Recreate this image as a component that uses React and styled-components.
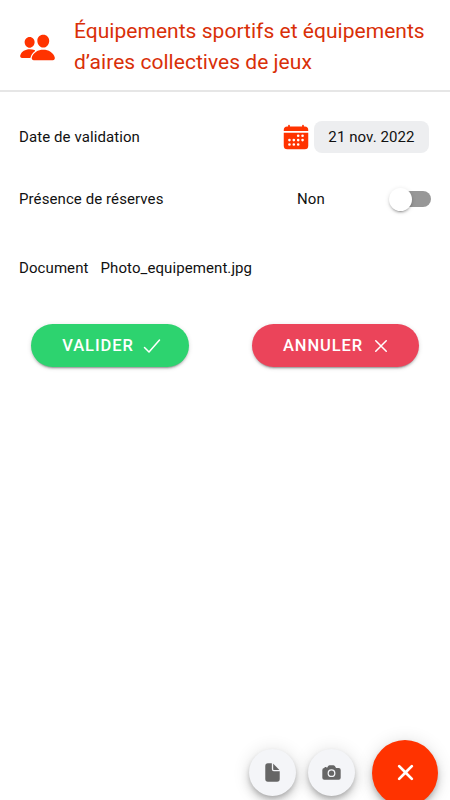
import React from "react";
import styled, { createGlobalStyle } from "styled-components";
import {
  IoPeople,
  IoCalendar,
  IoCheckmarkOutline,
  IoCloseOutline,
  IoClose,
  IoDocument,
  IoCamera,
} from "react-icons/io5";

const GlobalStyle = createGlobalStyle`
  * { box-sizing: border-box; }
  body { margin: 0; background: #fff; }
  button { font-family: inherit; border: 0; padding: 0; margin: 0; cursor: pointer; }
  svg { display: block; flex: none; }
`;

const Screen = styled.div`
  width: 450px;
  height: 800px;
  overflow: hidden;
  display: flex;
  flex-direction: column;
  background: #fff;
  color: #111;
  font-family: Roboto, sans-serif;
`;

const Header = styled.header`
  height: 92px;
  flex: none;
  display: flex;
  align-items: center;
  padding: 4px 0 0 19px;
  gap: 18px;
  border-bottom: 2px solid #e6e6e6;
  color: #ff3300;
`;

const Title = styled.h1`
  margin: 0;
  font-size: 21px;
  line-height: 31px;
  font-weight: 400;
  letter-spacing: 0.03px;
  color: #d92f08;
  white-space: nowrap;
`;

const Form = styled.main`
  display: flex;
  flex-direction: column;
  padding: 14px 19px 0;
`;

const Row = styled.div`
  display: flex;
  align-items: center;
  height: ${(p) => p.$height}px;
  font-size: 15px;
  letter-spacing: 0.09px;
`;

const Label = styled.span`
  width: ${(p) => p.$width || 263}px;
  flex: none;
`;

const CalendarIcon = styled(IoCalendar)`
  color: #ff3300;
`;

const DateChip = styled.button`
  width: 115px;
  height: 32px;
  margin-left: 4px;
  border-radius: 8px;
  background: #edeef0;
  color: #111;
  font-size: 15px;
  letter-spacing: 0.09px;
`;

const Value = styled.span`
  width: 108px;
  padding-left: ${(p) => p.$indent || 0}px;
`;

const Track = styled.div`
  width: 41px;
  height: 16px;
  border-radius: 8px;
  background: #979797;
  display: flex;
  align-items: center;
`;

const Thumb = styled.div`
  width: 23px;
  height: 23px;
  flex: none;
  margin-left: -1px;
  border-radius: 50%;
  background: #fff;
  box-shadow: 0 3px 1px -2px rgba(0, 0, 0, 0.2), 0 2px 2px rgba(0, 0, 0, 0.14),
    0 1px 5px rgba(0, 0, 0, 0.12);
`;

const Actions = styled.div`
  display: flex;
  justify-content: space-between;
  padding: 19px 12.5px 0 12px;
`;

const ActionButton = styled.button`
  width: ${(p) => p.$width}px;
  height: 43px;
  padding-left: 6px;
  border-radius: 22px;
  display: flex;
  align-items: center;
  justify-content: center;
  gap: 6px;
  background: ${(p) => p.$color};
  color: #fff;
  font-size: 16.5px;
  font-weight: 500;
  letter-spacing: 0.9px;
  box-shadow: 0 3px 1px -2px rgba(0, 0, 0, 0.2), 0 2px 2px rgba(0, 0, 0, 0.14),
    0 1px 5px rgba(0, 0, 0, 0.12);
`;

const FabBar = styled.div`
  flex: none;
  width: 450px;
  height: 61px;
  margin-top: auto;
  padding-right: 12px;
  display: flex;
  align-items: flex-start;
  justify-content: flex-end;
`;

const Fab = styled.button`
  width: ${(p) => (p.$main ? 66 : 47)}px;
  height: ${(p) => (p.$main ? 66 : 47)}px;
  flex: none;
  margin-left: ${(p) => (p.$main ? 17 : 12)}px;
  margin-top: ${(p) => (p.$main ? 0.5 : 10)}px;
  border-radius: 50%;
  display: flex;
  align-items: center;
  justify-content: center;
  background: ${(p) => (p.$main ? "#ff3300" : "#f4f5f8")};
  color: ${(p) => (p.$main ? "#fff" : "#666")};
  box-shadow: 0 3px 5px -1px rgba(0, 0, 0, 0.2), 0 6px 10px rgba(0, 0, 0, 0.14),
    0 1px 18px rgba(0, 0, 0, 0.12);
`;

export default function App() {
  return (
    <Screen>
      <GlobalStyle />
      <Header>
        <IoPeople size={37} />
        <Title>
          Équipements sportifs et équipements
          <br />
          d’aires collectives de jeux
        </Title>
      </Header>
      <Form>
        <Row $height={62}>
          <Label>Date de validation</Label>
          <CalendarIcon size={28} />
          <DateChip>21 nov. 2022</DateChip>
        </Row>
        <Row $height={62}>
          <Label>Présence de réserves</Label>
          <Value $indent={15}>Non</Value>
          <Track role="switch" aria-checked="false">
            <Thumb />
          </Track>
        </Row>
        <Row $height={75}>
          <Label $width={81.5}>Document</Label>
          <Value>Photo_equipement.jpg</Value>
        </Row>
        <Actions>
          <ActionButton $width={158} $color="#2dd36f">
            VALIDER
            <IoCheckmarkOutline size={24} />
          </ActionButton>
          <ActionButton $width={167} $color="#eb445a">
            ANNULER
            <IoCloseOutline size={24} />
          </ActionButton>
        </Actions>
      </Form>
      <FabBar>
        <Fab aria-label="Fichier">
          <IoDocument size={21} />
        </Fab>
        <Fab aria-label="Photo">
          <IoCamera size={21} />
        </Fab>
        <Fab $main aria-label="Fermer">
          <IoClose size={29} />
        </Fab>
      </FabBar>
    </Screen>
  );
}
